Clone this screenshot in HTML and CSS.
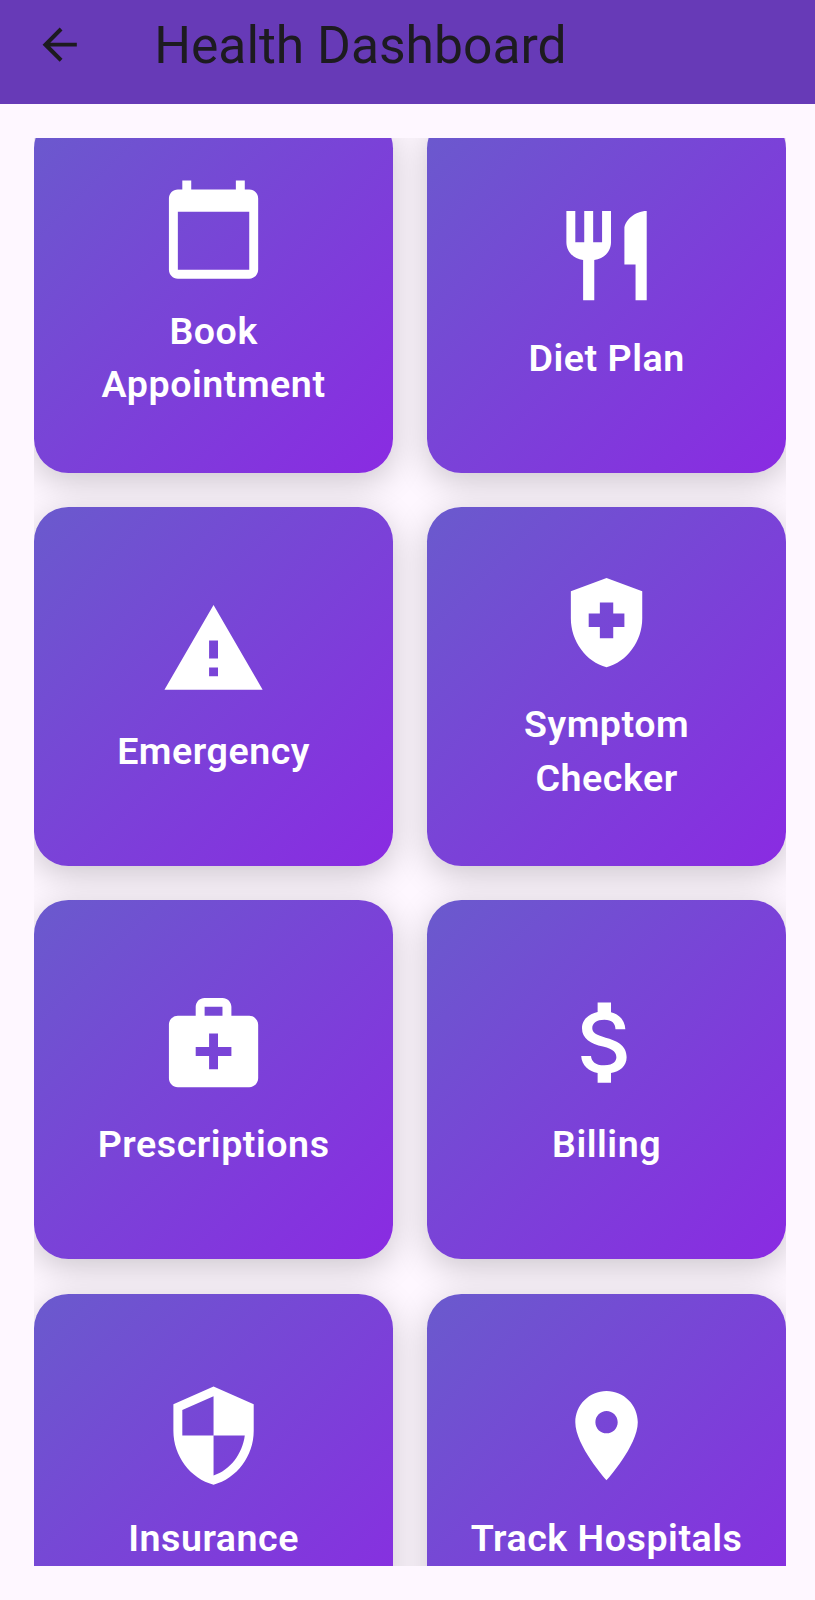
FILE: index.html
```html
<!DOCTYPE html>
<html lang="en">
  <head>
    <meta charset="utf-8">
    <title>Health Dashboard</title>
    <link rel="stylesheet" href="styles.css">
  </head>
  <body>
    <div class="screen">
      <header class="appbar">
        <svg class="back" viewBox="0 0 24 24"><path d="M20 11.1H7.6l5.7-5.7L12 4l-8 8 8 8 1.3-1.4L7.6 12.9H20z"/></svg>
        <h1 class="title">Health Dashboard</h1>
      </header>

      <main class="viewport">
        <div class="grid">

          <div class="card">
            <svg class="icon" viewBox="0 0 24 24"><path d="M20 3h-1V1h-2v2H7V1H5v2H4c-1.1 0-2 .9-2 2v16c0 1.1.9 2 2 2h16c1.1 0 2-.9 2-2V5c0-1.1-.9-2-2-2zm0 18H4V8h16v13z"/></svg>
            <span class="label">Book<br>Appointment</span>
          </div>

          <div class="card">
            <svg class="icon" viewBox="0 0 24 24"><path d="M11 9H9V2H7v7H5V2H3v7c0 2.12 1.66 3.84 3.75 3.97V22h2.5v-9.03C11.34 12.84 13 11.12 13 9V2h-2v7zm5-3v8h2.5v8H21V2c-2.76 0-5 2.24-5 4z"/></svg>
            <span class="label">Diet Plan</span>
          </div>

          <div class="card">
            <svg class="icon" viewBox="0 0 24 24"><path d="M1 21h22L12 2 1 21zm12-3h-2v-2h2v2zm0-4h-2v-4h2v4z"/></svg>
            <span class="label">Emergency</span>
          </div>

          <div class="card">
            <svg class="icon" viewBox="0 0 24 24"><path d="M10.5 13H8v-3h2.5V7.5h3V10H16v3h-2.5v2.5h-3V13zM12 2L4 5v6.09c0 5.05 3.41 9.76 8 10.91c4.59-1.15 8-5.86 8-10.91V5L12 2z" fill-rule="evenodd"/></svg>
            <span class="label">Symptom<br>Checker</span>
          </div>

          <div class="card">
            <svg class="icon" viewBox="0 0 24 24"><path d="M20 6h-4V4c0-1.1-.9-2-2-2h-4c-1.1 0-2 .9-2 2v2H4c-1.1 0-2 .9-2 2v12c0 1.1.9 2 2 2h16c1.1 0 2-.9 2-2V8c0-1.1-.9-2-2-2zM10 4h4v2h-4V4zm6 11h-3v3h-2v-3H8v-2h3v-3h2v3h3v2z"/></svg>
            <span class="label">Prescriptions</span>
          </div>

          <div class="card">
            <svg class="icon" viewBox="0 0 24 24"><path d="M11.8 10.9c-2.27-.59-3-1.2-3-2.15 0-1.09 1.01-1.85 2.7-1.85 1.78 0 2.44.85 2.5 2.1h2.21c-.07-1.72-1.12-3.3-3.21-3.81V3h-3v2.16c-1.94.42-3.5 1.68-3.5 3.61 0 2.31 1.91 3.46 4.7 4.13 2.5.6 3 1.48 3 2.41 0 .69-.49 1.79-2.7 1.79-2.06 0-2.87-.92-2.98-2.1h-2.2c.12 2.19 1.76 3.42 3.68 3.83V21h3v-2.15c1.95-.37 3.5-1.5 3.5-3.55 0-2.84-2.43-3.81-4.7-4.4z"/></svg>
            <span class="label">Billing</span>
          </div>

          <div class="card">
            <svg class="icon" viewBox="0 0 24 24"><path d="M12 1L3 5v6c0 5.55 3.84 10.74 9 12 5.16-1.26 9-6.45 9-12V5l-9-4zm0 10.99h7c-.53 4.12-3.28 7.79-7 8.94V12H5V6.3l7-3.11v8.8z"/></svg>
            <span class="label">Insurance</span>
          </div>

          <div class="card">
            <svg class="icon" viewBox="0 0 24 24"><path d="M12 2C8.13 2 5 5.13 5 9c0 5.25 7 13 7 13s7-7.75 7-13c0-3.87-3.13-7-7-7zm0 9.5c-1.38 0-2.5-1.12-2.5-2.5s1.12-2.5 2.5-2.5 2.5 1.12 2.5 2.5-1.12 2.5-2.5 2.5z"/></svg>
            <span class="label">Track Hospitals</span>
          </div>

        </div>
      </main>
    </div>
  </body>
</html>
```

FILE: styles.css
```css
html, body, h1{
  margin:0px;
  padding:0px;
}
body{
  background-color:#fef7ff;
  font-family:Roboto, sans-serif;
}
.screen{
  height:1600px;
  display:flex;
  flex-direction:column;
  box-sizing:border-box;
  padding-bottom:34.5px;
  overflow:hidden;
}
.appbar{
  height:103.7px;
  display:flex;
  align-items:center;
  box-sizing:border-box;
  padding:0px 34.3px 15px;
  background-color:#673ab7;
  color:#1d1b20;
}
.back{
  width:51.4px;
  height:51.4px;
  fill:#1d1b20;
}
.title{
  margin-left:68.5px;
  padding-top:4px;
  font-size:51.6px;
  font-weight:400;
  line-height:60px;
  white-space:nowrap;
}
/* the list is scrolled a little, so the first row is cut at the top */
.viewport{
  flex:1;
  min-height:0;
  margin:34.6px 29.4px 0px 34.3px;
  overflow:hidden;
}
.grid{
  display:grid;
  grid-template-columns:358.6px 358.6px;
  grid-auto-rows:358.9px;
  gap:34.4px;
  margin-top:-24.6px;
}
.card{
  display:flex;
  flex-direction:column;
  align-items:center;
  justify-content:center;
  gap:22.4px;
  box-sizing:border-box;
  padding-top:1.2px;
  border-radius:34.3px;
  background:linear-gradient(135deg, #6a5acd, #8a2be2);
  box-shadow:0px 8.6px 34px rgba(0, 0, 0, 0.2);
}
.icon{
  width:107.1px;
  height:107.1px;
  fill:#fff;
}
.label{
  color:#fff;
  font-size:37.6px;
  font-weight:600;
  line-height:53.3px;
  letter-spacing:0.54px;
  text-align:center;
}
```
